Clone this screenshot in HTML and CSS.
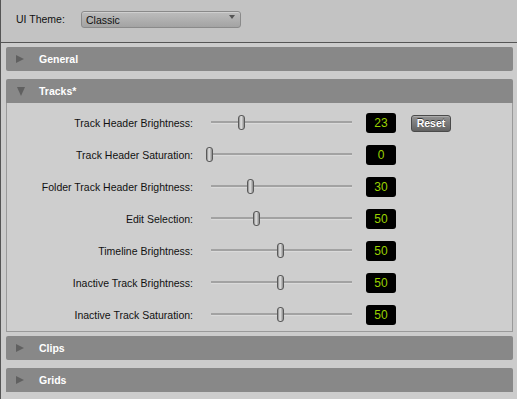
FILE: index.html
```html
<!DOCTYPE html>
<html>
<head>
<meta charset="utf-8">
<link rel="stylesheet" href="styles.css">
</head>
<body>
<div class="window">
  <header class="topbar">
    <span class="theme-label">UI Theme:</span>
    <div class="select">
      <span>Classic</span>
      <span class="select-arrow"></span>
    </div>
  </header>
  <main class="sections">
    <div class="bar gap8"><span class="tri tri-right"></span><span class="bar-title">General</span></div>
    <div class="bar"><span class="tri tri-down"></span><span class="bar-title">Tracks*</span></div>
    <div class="panel">
      <div class="row">
        <span class="label">Track Header Brightness:</span>
        <div class="slider"><div class="track"></div><div class="thumb" style="left:32px"></div></div>
        <span class="value">23</span>
        <button class="reset">Reset</button>
      </div>
      <div class="row">
        <span class="label">Track Header Saturation:</span>
        <div class="slider"><div class="track"></div><div class="thumb" style="left:0px"></div></div>
        <span class="value">0</span>
      </div>
      <div class="row">
        <span class="label">Folder Track Header Brightness:</span>
        <div class="slider"><div class="track"></div><div class="thumb" style="left:41px"></div></div>
        <span class="value">30</span>
      </div>
      <div class="row">
        <span class="label">Edit Selection:</span>
        <div class="slider"><div class="track"></div><div class="thumb" style="left:47px"></div></div>
        <span class="value">50</span>
      </div>
      <div class="row">
        <span class="label">Timeline Brightness:</span>
        <div class="slider"><div class="track"></div><div class="thumb" style="left:71px"></div></div>
        <span class="value">50</span>
      </div>
      <div class="row">
        <span class="label">Inactive Track Brightness:</span>
        <div class="slider"><div class="track"></div><div class="thumb" style="left:71px"></div></div>
        <span class="value">50</span>
      </div>
      <div class="row">
        <span class="label">Inactive Track Saturation:</span>
        <div class="slider"><div class="track"></div><div class="thumb" style="left:71px"></div></div>
        <span class="value">50</span>
      </div>
    </div>
    <div class="bar gap8"><span class="tri tri-right"></span><span class="bar-title">Clips</span></div>
    <div class="bar"><span class="tri tri-right"></span><span class="bar-title">Grids</span></div>
  </main>
</div>
</body>
</html>
```

FILE: styles.css
```css
* { box-sizing: border-box; }
html, body {
  margin: 0;
  padding: 0;
  width: 517px;
  height: 399px;
  overflow: hidden;
  background: #cbcbcb;
  font-family: "Liberation Sans", Arial, sans-serif;
}
.window {
  width: 517px;
  height: 399px;
  border-left: 1px solid #555;
  background: #cccccc;
}
.topbar {
  height: 43px;
  background: #c3c3c3;
  border-bottom: 1px solid #555;
  display: flex;
  align-items: flex-start;
  padding: 11px 0 0 15px;
}
.theme-label {
  font-size: 10.5px;
  color: #111;
  width: 65px;
  line-height: 17px;
}
.select {
  width: 160px;
  height: 17px;
  border: 1px solid #8a8a8a;
  border-radius: 3px;
  background: linear-gradient(#bdbdbd, #a3a3a3);
  box-shadow: inset 0 1px 0 #cfcfcf;
  display: flex;
  align-items: center;
  justify-content: space-between;
  padding: 0 5px 0 4px;
  font-size: 10.5px;
  color: #111;
}
.select-arrow {
  width: 0;
  height: 0;
  border-left: 3.5px solid transparent;
  border-right: 3.5px solid transparent;
  border-top: 4px solid #555;
  margin-top: -5px;
}
.sections {
  padding: 4px 4px 0 5px;
}
.bar {
  height: 24px;
  background: #888888;
  border-radius: 2px 2px 0 0;
  display: flex;
  align-items: center;
  padding-left: 10px;
}
.gap8 { margin-bottom: 8px; border-radius: 2px; }
.tri {
  width: 0;
  height: 0;
  margin-right: 15px;
}
.tri-right {
  border-top: 4.5px solid transparent;
  border-bottom: 4.5px solid transparent;
  border-left: 8px solid #606060;
}
.tri-down {
  border-left: 4px solid transparent;
  border-right: 4px solid transparent;
  border-top: 9px solid #606060;
  margin-left: 1px;
  margin-right: 14px;
}
.bar-title {
  color: #fff;
  font-weight: bold;
  font-size: 10.5px;
}
.panel {
  border: 1px solid #9a9a9a;
  border-top: none;
  background: #cecece;
  padding-top: 4px;
  margin-bottom: 4px;
}
.row {
  height: 32px;
  display: grid;
  grid-template-columns: 186px 163px 10px 30px 15px 40px;
  align-items: center;
}
.label {
  text-align: right;
  font-size: 10.5px;
  color: #111;
}
.slider {
  grid-column: 2;
  position: relative;
  margin-left: 13px;
  width: 150px;
  height: 16px;
}
.track {
  position: absolute;
  left: 5px;
  right: 4px;
  top: 6px;
  height: 2px;
  background: #a2a2a2;
  box-shadow: 0 1px 1px #dcdcdc;
}
.thumb {
  position: absolute;
  top: 0;
  width: 7px;
  height: 15px;
  border: 1px solid #5a5a5a;
  border-radius: 3px;
  background: linear-gradient(90deg, #8a8a8a, #e6e6e6 40%, #c8c8c8 60%, #8a8a8a);
}
.value {
  grid-column: 4;
  width: 30px;
  height: 20px;
  background: #000;
  border-radius: 3px;
  color: #9ad200;
  font-size: 12px;
  display: flex;
  align-items: center;
  justify-content: center;
}
.reset {
  grid-column: 6;
  width: 40px;
  height: 17px;
  padding: 0;
  border: 1px solid #4a4a4a;
  border-radius: 3px;
  background: linear-gradient(#939393, #626262);
  box-shadow: inset 0 1px 0 #ababab;
  color: #fff;
  font-family: "Liberation Sans", Arial, sans-serif;
  font-weight: bold;
  font-size: 10.5px;
  text-shadow: 0 -1px 0 #333;
}
```
